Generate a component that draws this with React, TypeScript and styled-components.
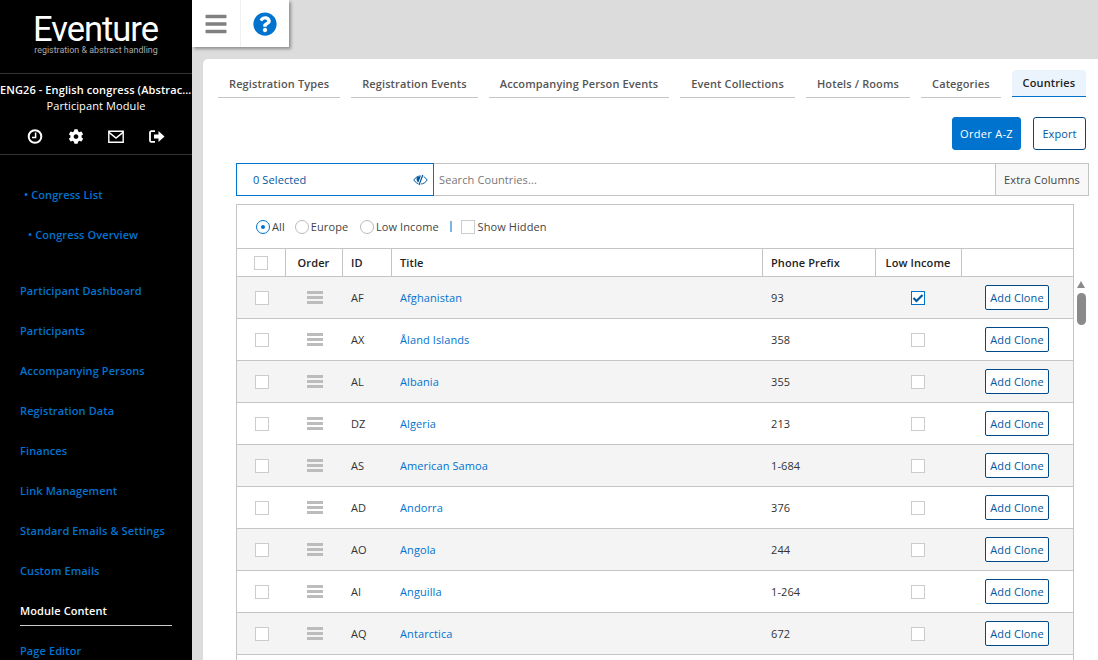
import React from 'react';
import styled, { createGlobalStyle } from 'styled-components';
import { FaBars, FaCog, FaQuestionCircle } from 'react-icons/fa';

const GlobalStyle = createGlobalStyle`
  html, body { margin: 0; padding: 0; height: 100%; overflow: hidden; background: #dcdcdc; }
  body { font-family: "Open Sans", "Liberation Sans", sans-serif; font-size: 11px; letter-spacing: 0.1px; color: #333; }
  * { box-sizing: border-box; }
`;

const BLUE = '#0073cf';
const LINE = '#c4c4c4';

const Shell = styled.div`
  display: flex;
  width: 1098px;
  height: 660px;
  overflow: hidden;
`;

const Sidebar = styled.aside`
  flex: 0 0 192px;
  background: #000;
  color: #fff;
  display: flex;
  flex-direction: column;
  height: 660px;
  overflow: hidden;
`;
const Brand = styled.div`
  flex: none;
  height: 74px;
  border-bottom: 1px solid #333;
  padding-top: 13px;
  text-align: center;
`;
const BrandName = styled.div`
  font-family: Roboto, sans-serif;
  font-size: 34.5px;
  line-height: 33px;
  letter-spacing: -1px;
  padding-right: 1px;
`;
const BrandTag = styled.div`
  font-family: Roboto, sans-serif;
  font-size: 8.9px;
  line-height: 9px;
  letter-spacing: 0;
  color: #aaa;
`;
const Congress = styled.div`
  flex: none;
  padding-top: 8px;
  text-align: center;
  font-size: 11px;
  line-height: 16px;
`;
const CongressTitle = styled.div`
  font-weight: 600;
  white-space: nowrap;
  overflow: hidden;
  text-overflow: ellipsis;
`;
const Tools = styled.div`
  flex: none;
  height: 41px;
  display: flex;
  align-items: flex-start;
  justify-content: center;
  gap: 24.5px;
  padding-top: 15px;
  border-bottom: 1px solid #333;
  svg { display: block; width: 16px; height: 15px; }
`;
const Nav = styled.nav`
  display: flex;
  flex-direction: column;
  padding-top: 20px;
`;
const SubLink = styled.a<{ $indent: number }>`
  height: 40px;
  line-height: 40px;
  padding-left: ${p => p.$indent}px;
  color: ${BLUE};
  font-size: 11px;
  font-weight: 600;
`;
const NavGap = styled.div`
  height: 16px;
`;
const NavLink = styled.a<{ $active?: boolean }>`
  display: block;
  flex: none;
  height: 40px;
  padding: 12px 0 0;
  margin: 0 20px;
  line-height: 16px;
  font-size: 11px;
  font-weight: 600;
  color: ${p => (p.$active ? '#fff' : BLUE)};
  position: relative;
  ${p => p.$active && `&::after { content: ''; position: absolute; left: 0; right: 0; bottom: 5px; height: 1px; background: #ccc; }`}
`;

const Main = styled.main`
  flex: 1;
  min-width: 0;
  display: flex;
  flex-direction: column;
  background: #dcdcdc;
`;
const TopBar = styled.div`
  flex: none;
  display: flex;
  width: 97px;
  height: 47px;
  background: #fff;
  box-shadow: 2px 2px 3px rgba(0, 0, 0, 0.35);
`;
const TopButton = styled.div<{ $blue?: boolean }>`
  flex: 1;
  display: flex;
  align-items: center;
  justify-content: center;
  color: ${p => (p.$blue ? BLUE : '#808080')};
  & + & { border-left: 1px solid #f0f0f0; }
`;
const Card = styled.section`
  margin: 12px 0 0 11px;
  flex: none;
  height: 601px;
  background: #fff;
  border-radius: 5px 0 0 0;
  padding: 11px 12px 0 15px;
`;
const Tabs = styled.div`
  display: flex;
  align-items: flex-start;
  gap: 11px;
  height: 28px;
`;
const Tab = styled.div<{ $active?: boolean }>`
  padding: 0 11px;
  height: ${p => (p.$active ? 27 : 28)}px;
  line-height: ${p => (p.$active ? 26 : 28)}px;
  font-size: 11px;
  font-weight: 600;
  letter-spacing: 0.12px;
  white-space: nowrap;
  color: ${p => (p.$active ? '#222' : '#555')};
  border-bottom: 1px solid ${p => (p.$active ? BLUE : LINE)};
  ${p => p.$active && `background: #ebf4fc; border-radius: 4px 4px 0 0;`}
`;
const Actions = styled.div`
  display: flex;
  justify-content: flex-end;
  gap: 12px;
  margin-top: 19px;
`;
const ActionButton = styled.button<{ $primary?: boolean }>`
  height: 33px;
  padding: 0;
  width: ${p => (p.$primary ? 69 : 53)}px;
  border: 1px solid ${p => (p.$primary ? BLUE : '#004a8a')};
  border-radius: 3px;
  background: ${p => (p.$primary ? BLUE : '#fff')};
  color: ${p => (p.$primary ? '#fff' : '#00589f')};
  font: 400 11px "Open Sans", sans-serif;
  letter-spacing: ${p => (p.$primary ? 0.3 : 0.1)}px;
`;
const SearchRow = styled.div`
  display: flex;
  height: 33px;
  margin: 13px -3px 0 18px;
`;
const Selected = styled.div`
  flex: 0 0 198px;
  display: flex;
  align-items: center;
  justify-content: space-between;
  padding: 0 5px 0 16px;
  border: 1px solid ${BLUE};
  color: #00589f;
  font-size: 11px;
`;
const SearchInput = styled.div`
  flex: 1;
  display: flex;
  align-items: center;
  padding-left: 5px;
  border: 1px solid ${LINE};
  border-width: 1px 0;
  color: #777;
`;
const ExtraColumns = styled.div`
  flex: 0 0 94px;
  display: flex;
  align-items: center;
  justify-content: center;
  border: 1px solid ${LINE};
  background: #f8f8f8;
  color: #444;
`;
const Panel = styled.div`
  position: relative;
  margin: 8px 12px 0 18px;
  width: 838px;
  height: 470px;
  border: 1px solid ${LINE};
  border-bottom: none;
`;
const Filters = styled.div`
  height: 43px;
  display: flex;
  align-items: center;
  padding-left: 19px;
  color: #444;
`;
const Radio = styled.span<{ $on?: boolean }>`
  width: 14px;
  height: 14px;
  border-radius: 50%;
  border: 1px solid ${p => (p.$on ? BLUE : '#bbb')};
  margin-right: 2px;
  position: relative;
  ${p => p.$on && `&::after { content: ''; position: absolute; left: 4px; top: 4px; width: 4px; height: 4px; border-radius: 50%; background: ${BLUE}; }`}
`;
const FilterLabel = styled.span<{ $gap: number }>`
  margin-right: ${p => p.$gap}px;
`;
const Divider = styled.span`
  width: 2px;
  height: 11px;
  margin: 0 9px 0 0;
  background: #7ab5e5;
`;
const Box = styled.span<{ $checked?: boolean }>`
  display: flex;
  align-items: center;
  justify-content: center;
  flex: none;
  width: 14px;
  height: 14px;
  background: #fff;
  border: 1px solid ${p => (p.$checked ? BLUE : '#ccc')};
`;
const HiddenBox = styled(Box)`
  margin-right: 3px;
`;
const HeadBox = styled(Box)`
  margin-left: 8px;
`;
const CenterBox = styled(Box)`
  margin: 0 auto;
`;
const Table = styled.table`
  width: 836px;
  border-collapse: collapse;
  table-layout: fixed;
  font-size: 11px;
`;
const Th = styled.th<{ $center?: boolean }>`
  height: 28px;
  padding: 0 0 0 ${p => (p.$center ? 0 : 8.5)}px;
  border: 1px solid ${LINE};
  border-left: none;
  text-align: ${p => (p.$center ? 'center' : 'left')};
  font-weight: 600;
  color: #222;
  &:last-child { border-right: none; }
`;
const Row = styled.tr<{ $alt: boolean }>`
  height: 42px;
  background: ${p => (p.$alt ? '#f4f4f4' : '#fff')};
  border-bottom: 1px solid ${LINE};
`;
const Td = styled.td<{ $center?: boolean }>`
  padding: 0 0 0 ${p => (p.$center ? 0 : 9)}px;
  text-align: ${p => (p.$center ? 'center' : 'left')};
  color: #333;
`;
const CheckCell = styled.td`
  padding-left: 18px;
`;
const HandleCell = styled.td`
  padding: 0 0 0 22px;
`;
const TitleLink = styled.a`
  color: ${BLUE};
`;
const Handle = styled.span`
  display: block;
  width: 16px;
  height: 13px;
  border-top: 3px solid #bcbcbc;
  border-bottom: 3px solid #bcbcbc;
  position: relative;
  &::after { content: ''; position: absolute; left: 0; right: 0; top: 2px; height: 3px; background: #bcbcbc; }
`;
const CloneButton = styled.button`
  width: 64px;
  height: 25px;
  padding: 0;
  background: #fff;
  border: 1px solid #004a8a;
  border-radius: 2px;
  color: #00589f;
  font: 11px "Open Sans", sans-serif;
  letter-spacing: 0.1px;
`;
const ScrollBar = styled.div`
  position: absolute;
  left: 840px;
  top: 76px;
  width: 9px;
`;
const ScrollArrow = styled.div`
  width: 0;
  border-left: 4.5px solid transparent;
  border-right: 4.5px solid transparent;
  border-bottom: 7px solid #8a8a8a;
`;
const ScrollThumb = styled.div`
  margin-top: 5px;
  width: 9px;
  height: 32px;
  border-radius: 5px;
  background: #8a8a8a;
`;

const navItems = [
  'Participant Dashboard',
  'Participants',
  'Accompanying Persons',
  'Registration Data',
  'Finances',
  'Link Management',
  'Standard Emails & Settings',
  'Custom Emails',
];
const tabs = ['Registration Types', 'Registration Events', 'Accompanying Person Events', 'Event Collections', 'Hotels / Rooms', 'Categories'];
const countries = [
  ['AF', 'Afghanistan', '93'],
  ['AX', 'Åland Islands', '358'],
  ['AL', 'Albania', '355'],
  ['DZ', 'Algeria', '213'],
  ['AS', 'American Samoa', '1-684'],
  ['AD', 'Andorra', '376'],
  ['AO', 'Angola', '244'],
  ['AI', 'Anguilla', '1-264'],
  ['AQ', 'Antarctica', '672'],
];

const Check = () => (
  <svg width="12" height="12" viewBox="0 0 12 12">
    <path d="M1.5 6 4.5 9 10.5 3" fill="none" stroke="#00589f" strokeWidth="2.2" />
  </svg>
);

const ClockIcon = () => (
  <svg viewBox="0 0 16 15">
    <circle cx="8" cy="7.5" r="6.3" fill="none" stroke="#fff" strokeWidth="2" />
    <path d="M8.6 3.5V8.4H5" fill="none" stroke="#fff" strokeWidth="1.5" />
  </svg>
);

const MailIcon = () => (
  <svg viewBox="0 0 16 15">
    <path d="M.8 2.2h14.4v11H.8z" fill="none" stroke="#fff" strokeWidth="1.4" />
    <path d="M1 3.4 8 9l7-5.6" fill="none" stroke="#fff" strokeWidth="1.4" />
  </svg>
);

const LogoutIcon = () => (
  <svg viewBox="0 0 16 15">
    <path d="M6 2.2H2.4A1.4 1.4 0 0 0 1 3.6v7.8a1.4 1.4 0 0 0 1.4 1.4H6" fill="none" stroke="#fff" strokeWidth="1.8" />
    <path d="M5 5.4h4.5V2L15.5 7.5 9.5 13V9.6H5z" fill="#fff" />
  </svg>
);

const EyeOffIcon = () => (
  <svg width="15" height="12" viewBox="0 0 15 12">
    <path d="M.8 6C2.5 3.4 4.8 2 7.5 2s5 1.4 6.7 4c-1.7 2.6-4 4-6.7 4S2.5 8.6.8 6z" fill="none" stroke="#00589f" strokeWidth="1" />
    <path d="M3.6 3.4C4.6 2.7 6 2.3 7.8 2.4L5.4 8.6C4 7.6 3.2 5.2 3.6 3.4z" fill="#00589f" />
    <path d="M10 .8 6 11.2" stroke="#fff" strokeWidth="2.6" />
    <path d="M9.8 1 6 11" stroke="#00589f" strokeWidth="1.2" />
  </svg>
);

const App = () => (
  <Shell>
    <GlobalStyle />
    <Sidebar>
      <Brand>
        <BrandName>Eventure</BrandName>
        <BrandTag>registration &amp; abstract handling</BrandTag>
      </Brand>
      <Congress>
        <CongressTitle>ENG26 - English congress (Abstract handling)</CongressTitle>
        <div>Participant Module</div>
      </Congress>
      <Tools>
        <ClockIcon />
        <FaCog color="#fff" />
        <MailIcon />
        <LogoutIcon />
      </Tools>
      <Nav>
        <SubLink $indent={24}>• Congress List</SubLink>
        <SubLink $indent={28}>• Congress Overview</SubLink>
        <NavGap />
        {navItems.map(item => (
          <NavLink key={item}>{item}</NavLink>
        ))}
        <NavLink $active>Module Content</NavLink>
        <NavLink>Page Editor</NavLink>
      </Nav>
    </Sidebar>
    <Main>
      <TopBar>
        <TopButton>
          <FaBars size={24} />
        </TopButton>
        <TopButton $blue>
          <FaQuestionCircle size={24} />
        </TopButton>
      </TopBar>
      <Card>
        <Tabs>
          {tabs.map(t => (
            <Tab key={t}>{t}</Tab>
          ))}
          <Tab $active>Countries</Tab>
        </Tabs>
        <Actions>
          <ActionButton $primary>Order A-Z</ActionButton>
          <ActionButton>Export</ActionButton>
        </Actions>
        <SearchRow>
          <Selected>
            0 Selected
            <EyeOffIcon />
          </Selected>
          <SearchInput>Search Countries...</SearchInput>
          <ExtraColumns>Extra Columns</ExtraColumns>
        </SearchRow>
        <Panel>
          <Filters>
            <Radio $on />
            <FilterLabel $gap={10}>All</FilterLabel>
            <Radio />
            <FilterLabel $gap={11.6}>Europe</FilterLabel>
            <Radio />
            <FilterLabel $gap={10.8}>Low Income</FilterLabel>
            <Divider />
            <HiddenBox />
            <FilterLabel $gap={0}>Show Hidden</FilterLabel>
          </Filters>
          <Table>
            <colgroup>
              <col width="48" />
              <col width="57" />
              <col width="49" />
              <col width="371" />
              <col width="113" />
              <col width="86" />
              <col width="112" />
            </colgroup>
            <thead>
              <tr>
                <Th>
                  <HeadBox />
                </Th>
                <Th $center>Order</Th>
                <Th>ID</Th>
                <Th>Title</Th>
                <Th>Phone Prefix</Th>
                <Th $center>Low Income</Th>
                <Th />
              </tr>
            </thead>
            <tbody>
              {countries.map(([id, title, prefix], i) => (
                <Row key={id} $alt={i % 2 === 0}>
                  <CheckCell>
                    <Box />
                  </CheckCell>
                  <HandleCell>
                    <Handle />
                  </HandleCell>
                  <Td>{id}</Td>
                  <Td>
                    <TitleLink>{title}</TitleLink>
                  </Td>
                  <Td>{prefix}</Td>
                  <Td $center>
                    <CenterBox $checked={i === 0}>{i === 0 && <Check />}</CenterBox>
                  </Td>
                  <Td $center>
                    <CloneButton>Add Clone</CloneButton>
                  </Td>
                </Row>
              ))}
            </tbody>
          </Table>
          <ScrollBar>
            <ScrollArrow />
            <ScrollThumb />
          </ScrollBar>
        </Panel>
      </Card>
    </Main>
  </Shell>
);

export default App;
